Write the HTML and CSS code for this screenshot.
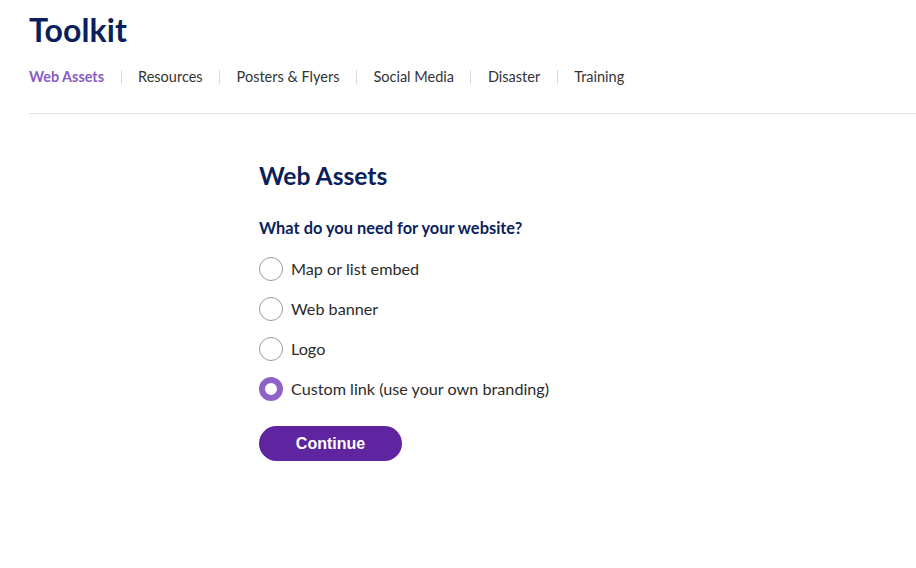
FILE: index.html
```html
<!DOCTYPE html>
<html lang="en">
<head>
<meta charset="utf-8">
<title>Toolkit</title>
<link rel="stylesheet" href="styles.css">
</head>
<body>
<header class="header">
  <h1 class="title">Toolkit</h1>
  <nav class="nav">
    <a class="nav-item active" href="#">Web Assets</a>
    <span class="sep"></span>
    <a class="nav-item" href="#">Resources</a>
    <span class="sep"></span>
    <a class="nav-item" href="#">Posters &amp; Flyers</a>
    <span class="sep"></span>
    <a class="nav-item" href="#">Social Media</a>
    <span class="sep"></span>
    <a class="nav-item" href="#">Disaster</a>
    <span class="sep"></span>
    <a class="nav-item" href="#">Training</a>
  </nav>
</header>
<main class="main">
  <h2 class="section-title">Web Assets</h2>
  <p class="question">What do you need for your website?</p>
  <div class="options">
    <label class="option"><span class="radio"></span><span class="label">Map or list embed</span></label>
    <label class="option"><span class="radio"></span><span class="label">Web banner</span></label>
    <label class="option"><span class="radio"></span><span class="label">Logo</span></label>
    <label class="option"><span class="radio checked"></span><span class="label">Custom link (use your own branding)</span></label>
  </div>
  <button class="btn">Continue</button>
</main>
</body>
</html>
```
FILE: styles.css
```css
* { box-sizing: border-box; }
html, body { margin: 0; padding: 0; background: #fff; }
body { font-family: Lato, "Noto Sans", sans-serif; color: #2b2b2b; }
.header { margin-left: 29px; padding-top: 10px; border-bottom: 1px solid #e2e2e2; height: 114px; }
.title { margin: 0; font-size: 32px; font-weight: 700; color: #0b1f5c; line-height: 40px; letter-spacing: 0.1px; }
.nav { display: flex; align-items: center; margin-top: 17px; }
.nav-item { font-size: 14.5px; color: #333; text-decoration: none; line-height: 20px; }
.nav-item.active { color: #8a5cc4; font-weight: 700; font-size: 14.4px; }
.sep { width: 1px; height: 14px; background: #d4dbe4; margin: 0 16.5px; }
.main { padding: 47px 0 0 259px; }
.section-title { margin: 0; font-size: 24.6px; font-weight: 700; color: #0b1f5c; line-height: 30px; }
.question { margin: 27px 0 0; font-size: 16.4px; font-weight: 700; color: #0b1f5c; line-height: 20px; }
.options { display: flex; flex-direction: column; gap: 16px; margin-top: 19px; }
.option { display: flex; align-items: center; gap: 8px; height: 24px; }
.radio { width: 24px; height: 24px; border-radius: 50%; border: 1px solid #9a9a9a; background: #fff; flex: none; }
.radio.checked { border: 6px solid #8e62c6; }
.label { font-size: 16.2px; color: #2b2b2b; line-height: 22px; }
.btn { margin-top: 25px; width: 143px; height: 35px; border: none; border-radius: 18px; background: #5f249f; color: #fff; font-family: "Liberation Sans", Arial, sans-serif; font-weight: 700; font-size: 16px; }
```
